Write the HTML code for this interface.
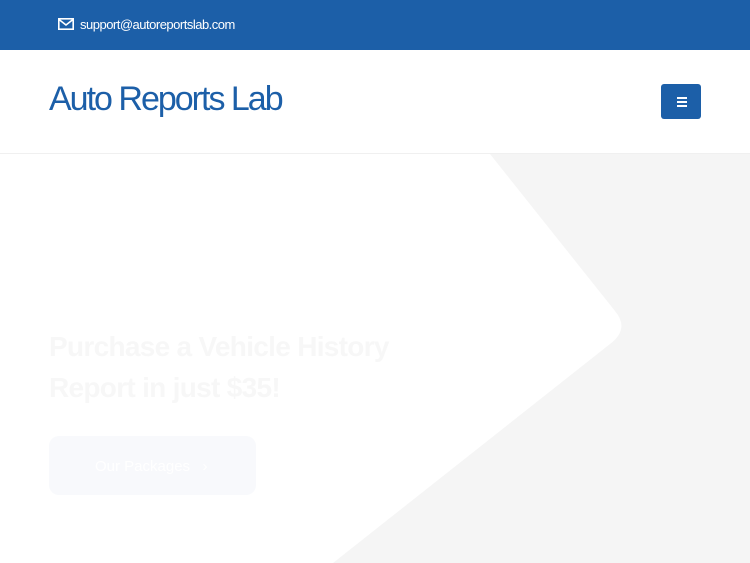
<!DOCTYPE html>
<html><head><meta charset="utf-8"><style>
*{margin:0;padding:0;box-sizing:border-box}
body{width:750px;height:563px;overflow:hidden;background:#fff;font-family:"Liberation Sans",Arial,sans-serif;position:relative}
.top{position:absolute;left:0;top:0;width:750px;height:50px;background:#1c5fa8;color:#fff;font-size:13px;letter-spacing:-0.5px}
.top svg{position:absolute;left:58px;top:18px}
.top span{position:absolute;left:80px;top:17px}
.hdr{position:absolute;left:0;top:50px;width:750px;height:104px;background:#fff;border-bottom:1px solid #f0f0f0}
.logo{position:absolute;left:49px;top:30px;font-size:34px;color:#1c5fa8;letter-spacing:-2px}
.btn{position:absolute;left:661px;top:34px;width:40px;height:35px;background:#1c5fa8;border-radius:3px}
.btn i{position:absolute;left:16px;width:10px;height:2px;background:#fff}
.bg{position:absolute;left:0;top:154px}
h1{position:absolute;left:49px;top:326px;font-size:28px;line-height:41px;font-weight:bold;color:#f7f7f7;letter-spacing:-0.7px}
.cta{position:absolute;left:49px;top:436px;width:207px;height:59px;background:#f8f9fc;border-radius:10px;color:#fff;font-size:15px;padding:22px 0 0 46px}
</style></head><body>
<div class="top"><svg width="16" height="12" viewBox="0 0 16 12"><rect x="0.8" y="0.8" width="14.4" height="10.4" fill="none" stroke="#fff" stroke-width="1.6"/><path d="M1 1.5L8 7L15 1.5" fill="none" stroke="#fff" stroke-width="1.6"/></svg><span>support@autoreportslab.com</span></div>
<svg class="bg" width="750" height="409" viewBox="0 0 750 409"><path d="M490 0H750V409H333L610 190Q630 175 615 157Z" fill="#f5f5f5"/></svg>
<div class="hdr"><div class="logo">Auto Reports Lab</div><div class="btn"><i style="top:13px"></i><i style="top:17px"></i><i style="top:21px"></i></div></div>
<h1>Purchase a Vehicle History<br>Report in just $35!</h1>
<div class="cta">Our Packages &nbsp; ›</div>
</body></html>
